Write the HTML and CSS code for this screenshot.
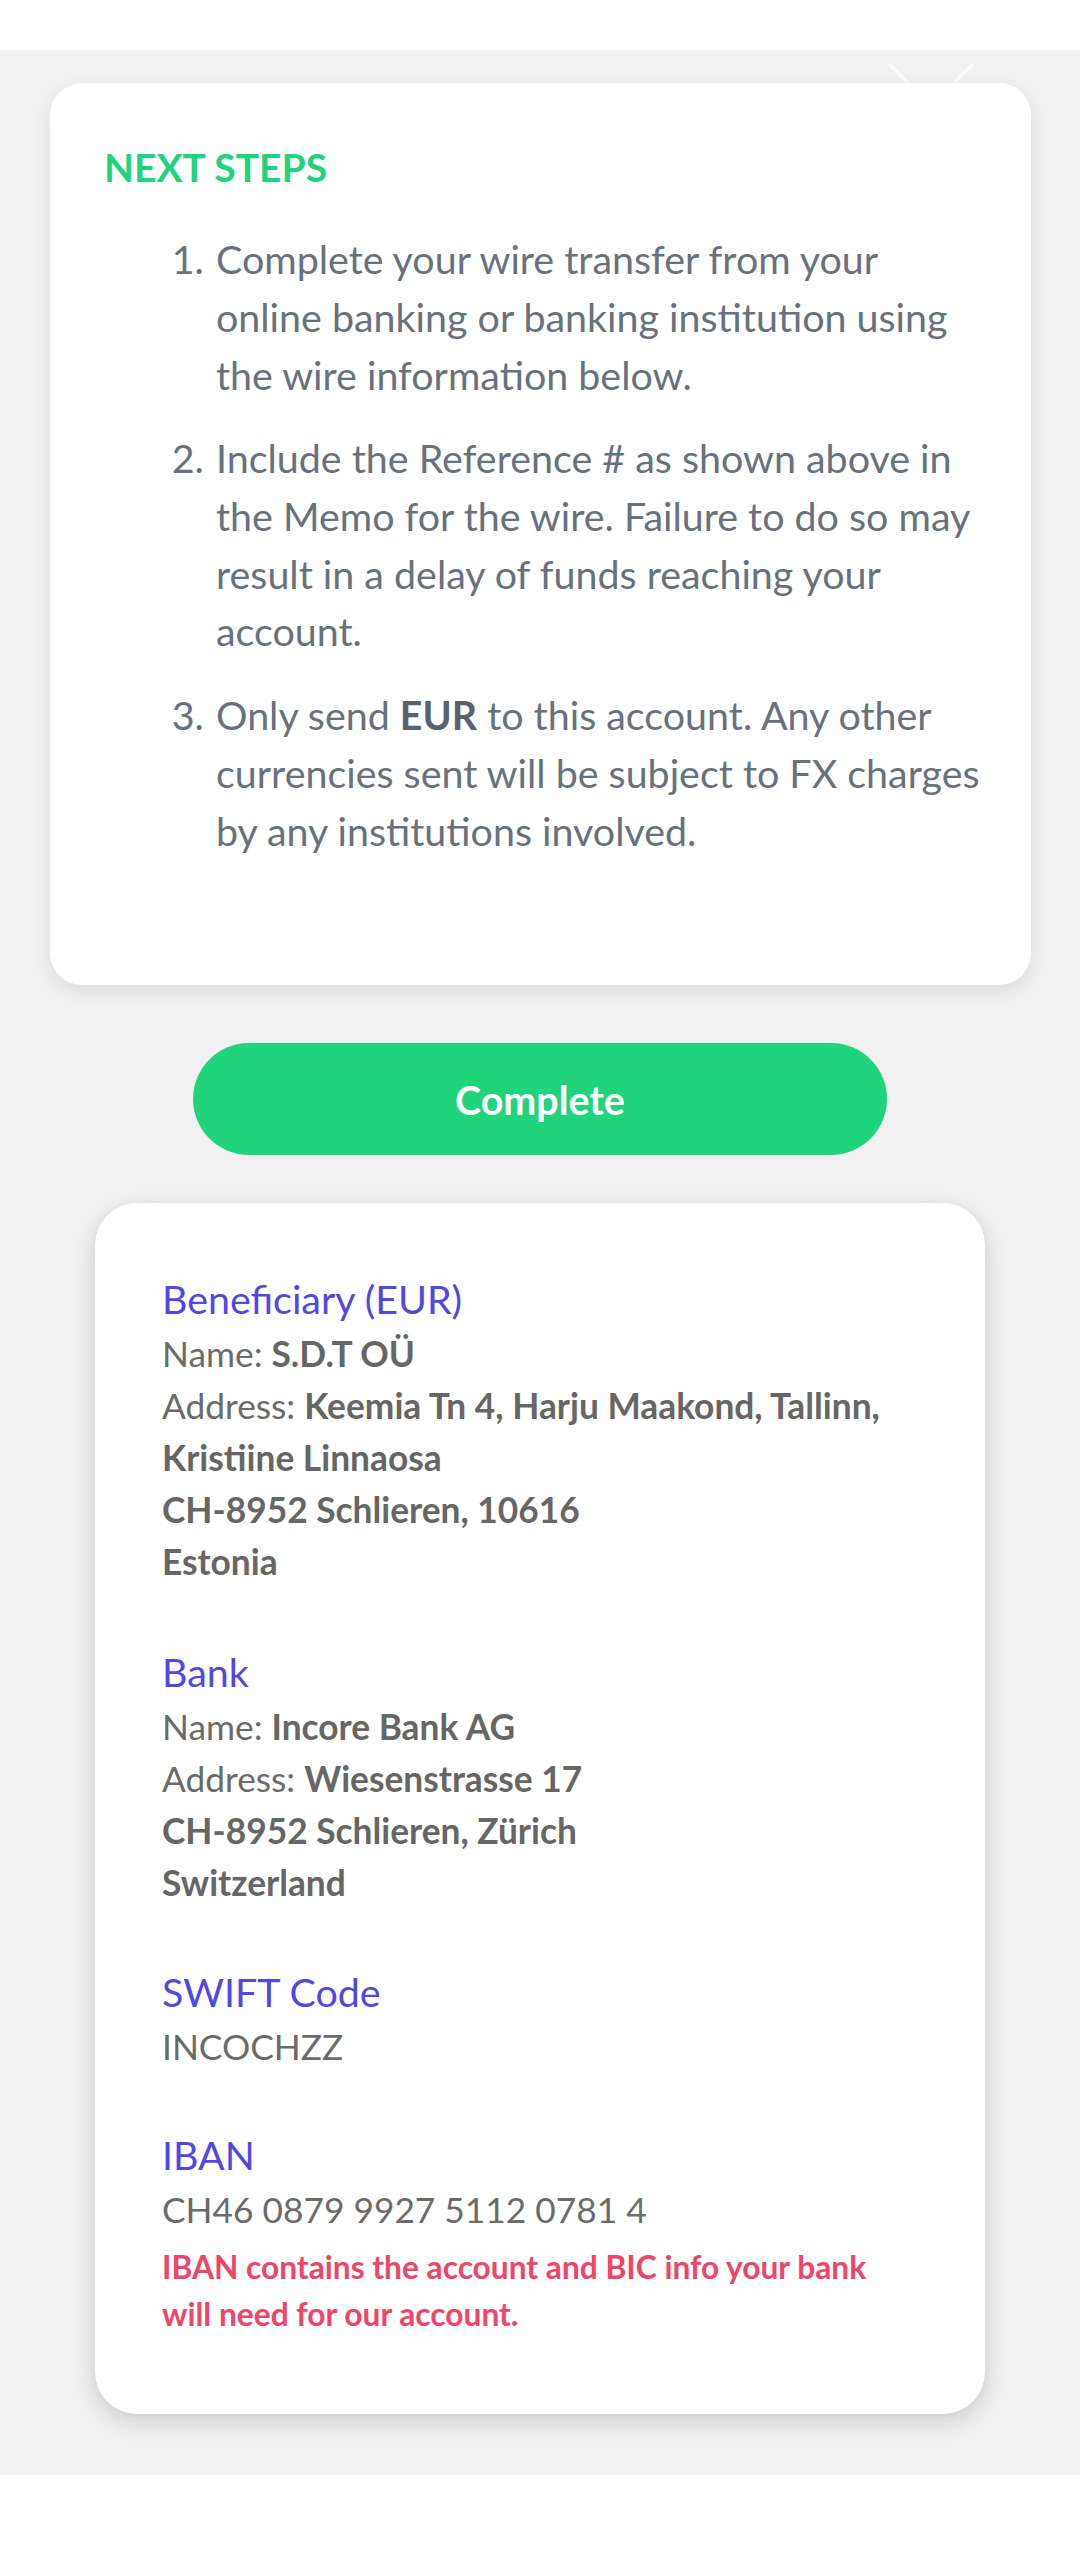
FILE: index.html
```html
<!DOCTYPE html>
<html lang="en">
<head>
<meta charset="utf-8">
<title>Next steps</title>
<link rel="stylesheet" href="styles.css">
</head>
<body>
<div class="topbar"></div>
<main class="stage">
  <svg class="close-icon" viewBox="0 0 88 88" aria-hidden="true">
    <path d="M2 2 L86 86 M86 2 L2 86" />
  </svg>
  <section class="card steps-card">
    <h2 class="steps-title">NEXT STEPS</h2>
    <ol class="steps-list">
      <li>Complete your wire transfer from your online banking or banking institution using the wire information below.</li>
      <li>Include the Reference # as shown above in the Memo for the wire. Failure to do so may result in a delay of funds reaching your account.</li>
      <li>Only send <strong>EUR</strong> to this account. Any other currencies sent will be subject to FX charges by any institutions involved.</li>
    </ol>
  </section>
  <div class="action-row">
    <button class="complete-btn" type="button">Complete</button>
  </div>
  <section class="card wire-card">
    <div class="wire-section">
      <div class="wire-title">Beneficiary (EUR)</div>
      <div class="wire-line">Name: <b>S.D.T OÜ</b></div>
      <div class="wire-line">Address: <b>Keemia Tn 4, Harju Maakond, Tallinn, Kristiine Linnaosa</b></div>
      <div class="wire-line"><b>CH-8952 Schlieren, 10616</b></div>
      <div class="wire-line"><b>Estonia</b></div>
    </div>
    <div class="wire-section">
      <div class="wire-title">Bank</div>
      <div class="wire-line">Name: <b>Incore Bank AG</b></div>
      <div class="wire-line">Address: <b>Wiesenstrasse 17</b></div>
      <div class="wire-line"><b>CH-8952 Schlieren, Zürich</b></div>
      <div class="wire-line"><b>Switzerland</b></div>
    </div>
    <div class="wire-section">
      <div class="wire-title">SWIFT Code</div>
      <div class="wire-value">INCOCHZZ</div>
    </div>
    <div class="wire-section">
      <div class="wire-title">IBAN</div>
      <div class="wire-value">CH46 0879 9927 5112 0781 4</div>
      <p class="wire-note">IBAN contains the account and BIC info your bank will need for our account.</p>
    </div>
  </section>
</main>
<div class="bottombar"></div>
</body>
</html>
```
FILE: styles.css
```css
* { box-sizing: border-box; }

html, body {
  margin: 0;
  padding: 0;
  background: #ffffff;
  font-family: Lato, "Open Sans", "Liberation Sans", sans-serif;
}

.topbar { height: 50px; background: #ffffff; }
.bottombar { height: 75px; background: #ffffff; }

.stage {
  position: relative;
  background: #f1f1f1;
  padding: 33px 0 61px;
  display: flex;
  flex-direction: column;
}

.close-icon {
  position: absolute;
  left: 887px;
  top: 12px;
  width: 88px;
  height: 88px;
  z-index: 0;
}
.close-icon path {
  stroke: #fbfbfb;
  stroke-width: 3.5;
  fill: none;
}

.card {
  position: relative;
  z-index: 1;
  background: #ffffff;
}

.steps-card {
  margin: 0 49px 0 50px;
  border-radius: 32px;
  padding: 61px 47px 126px 54px;
  box-shadow: 0 6px 16px rgba(70, 80, 100, 0.12);
}

.steps-title {
  margin: 0;
  font-size: 39px;
  line-height: 47px;
  font-weight: 700;
  color: #20d47b;
}

.steps-list {
  margin: 39px 0 0;
  padding-left: 110px;
  font-size: 39.4px;
  line-height: 57.8px;
  color: #68717c;
}
.steps-list li { padding-left: 2px; }
.steps-list li + li { margin-top: 25.7px; }
.steps-list strong { font-weight: 700; color: #59626e; }

.action-row {
  display: flex;
  justify-content: center;
  padding: 58px 0 48px;
}

.complete-btn {
  width: 694px;
  height: 112px;
  border: none;
  border-radius: 56px;
  background: #20d47b;
  color: #ffffff;
  font-family: Lato, "Open Sans", "Liberation Sans", sans-serif;
  font-size: 39.4px;
  font-weight: 700;
  padding: 0;
}

.wire-card {
  margin: 0 95px;
  border-radius: 42px;
  padding: 65.5px 78px 75px 67px;
  box-shadow: 0 8px 22px rgba(0, 0, 0, 0.14), 0 0 6px rgba(0, 0, 0, 0.05);
  display: flex;
  flex-direction: column;
  gap: 52.5px;
}

.wire-section:first-child + .wire-section { margin-top: 1.5px; }

.wire-title {
  font-size: 39.4px;
  line-height: 59.1px;
  color: #5148e4;
}

.wire-line, .wire-value {
  font-size: 35.3px;
  line-height: 52px;
  color: #6b6b6b;
}
.wire-line b { font-weight: 700; color: #666666; }

.wire-note {
  margin: 8px 0 0;
  font-size: 31.7px;
  line-height: 47.25px;
  font-weight: 700;
  color: #ee4569;
}
```
